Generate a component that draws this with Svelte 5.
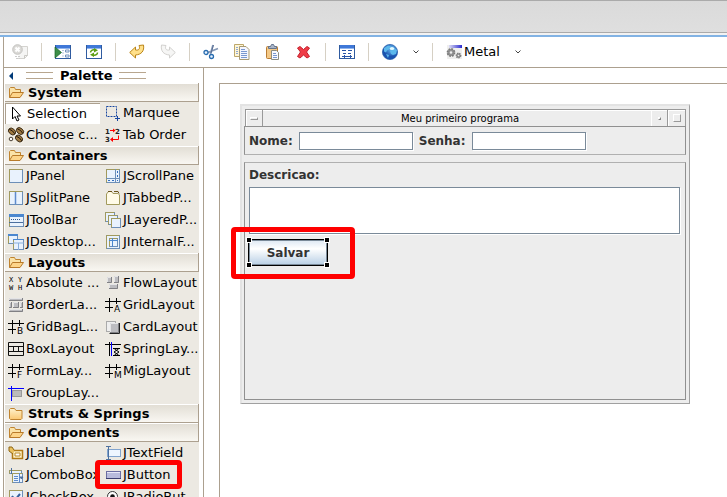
<script>
  const T = '#a29a5c';
  const B = '#6d8fb8';
  const window16 = '<rect x=".5" y="1.5" width="15" height="13" fill="#fff" stroke="#2f5ba0"/><rect x="1" y="1" width="14" height="3" fill="#3f78d8"/><path d="M1 4.5h14" stroke="#8fb4ee"/>';
  const hash = '<path d="M0 4.5h16M0 10.5h8M4.500 1v14M11.500 1v6" stroke="#000" fill="none"/>';
  const letter = (c) => `${hash}<text x="9" y="15" font-family="DejaVu Sans" font-size="9">${c}</text>`;
  const folderOpen = '<path d="M1.500 12.500v-9l1-1h4l1 2h5v3" fill="#fbe3a8" stroke="#c08430"/><path d="M1.500 12.500l3-5h11l-3.500 5z" fill="#fdd58a" stroke="#b87a2a"/>';
  const folderShut = '<path d="M1.500 12.500v-9l1-1h4l1.500 2h6v8l-1 1h-10.500z" fill="url(#fold)" stroke="#c08430"/>';
  const page = (x, y, w, h) => `<rect x="${x}.5" y="${y}.5" width="${w}" height="${h}" fill="#e9f2fd" stroke="${B}"/><path d="M${x}.5 ${y + h}.5V${y}.5h${w}" stroke="${T}" fill="none"/>`;
  const block = (x, y, w, h) => `<rect x="${x}" y="${y}" width="${w}" height="${h}" fill="#bcbcc0"/><path d="M${x + 0.5} ${y + h}V${y + 0.5}h${w}" stroke="#e4e4e6" fill="none"/><path d="M${x + w - 0.5} ${y}v${h - 0.5}H${x}" stroke="#808084" fill="none"/>`;
  const bean = (x, y) => `<g transform="rotate(40 ${x} ${y})"><ellipse cx="${x}" cy="${y}" rx="4" ry="2.900" fill="#a07a42" stroke="#2a1c0c" stroke-width=".8"/><path d="M${x - 3.5} ${y}q3.500 -1.500 7 0" stroke="#201408" stroke-width=".9" fill="none"/></g>`;

  const icons = {
    off: '<path d="M8 2.500h7.500v9l-3 3H6" fill="#f5f5f4" stroke="#d4d3cf"/><path d="M15.500 11.500h-3v3" stroke="#c9c8c4" fill="none"/><circle cx="5.500" cy="5.500" r="4.800" fill="#dad9d6" stroke="#c4c3c0"/><path d="M3.500 3.500l4 4m0-4l-4 4" stroke="#fff" stroke-width="2"/><path d="M3 12.500h5M4 14.500h4" stroke="#ccc" stroke-dasharray="2 1"/>',
    run: window16 + '<path d="M0 3v11l6.500-5.500z" fill="#3d8e48" stroke="#17642a" stroke-width=".7"/><path d="M7.500 6.500h1m2-.5h3.500v2h-3.500zM10.500 11h3.500v2h-3.500zM7.500 9h1M7.500 12h1" fill="#fff" stroke="#7090bd"/>',
    refresh: window16 + '<path d="M4.500 8.500c0-2 2-3 4-2.500M11.500 8.500c0 2-2 3-4 2.500" fill="none" stroke="#5d9e12" stroke-width="1.500"/><path d="M8 4l4 2.300-4 2.200zM8 13l-4-2.300 4-2.200z" fill="#5d9e12"/>',
    undo: '<path d="M.7 8.500L6.500 3v3c3 .5 5-1 3.500-4.500l4.500-.500c1 6-2 9.500-8 10v3z" fill="#ffe08a" stroke="#ba8518"/>',
    redo: '<path d="M15.300 8.500L9.500 3v3c-3 .5-5-1-3.500-4.500l-4.500-.500c-1 6 2 9.500 8 10v3z" fill="#f6f6f5" stroke="#d2d1cf"/>',
    cut: '<path d="M10 1L7.500 10M15 4.500L5 8.500" stroke="#8598b6" stroke-width="1.800"/><path d="M10.500 1L8 9" stroke="#4a628a" stroke-width=".8"/><circle cx="3" cy="8.500" r="2" fill="#e8f3ff" stroke="#286caf" stroke-width="1.300"/><circle cx="8.500" cy="12.500" r="2" fill="#e8f3ff" stroke="#286caf" stroke-width="1.300"/>',
    copy: '<path d="M.5 .5h9v12h-9z" fill="#fff6d5" stroke="#bda76b"/><path d="M2 3.500h2M2 5.500h2M2 7.500h2M2 9.500h2" stroke="#8ea6d4"/><path d="M5.500 2.500h6.500l3 3v10h-9.500z" fill="#f4f6ff" stroke="#a89a73"/><path d="M7 5.500h4M7 7.500h6M7 9.500h6M7 11.500h6M7 13.500h6" stroke="#7a98d0"/>',
    paste: '<rect x="1.500" y="2.500" width="11" height="12" rx="1" fill="#f4c987" stroke="#ba7d34"/><path d="M3.500 4.500V2.500h2l1-2h2l1 2h2v2z" fill="#a9b5c8" stroke="#65758e"/><path d="M6.500 6.500h5l2 2v7h-7z" fill="#f8faff" stroke="#8c8d80"/><path d="M8 9.500h3M8 11.500h4M8 13.500h4" stroke="#7a98d0"/>',
    del: '<path d="M4 2.500L7.500 5.500 11 2.500l2.500 1.500-3 4 3 4.500-2.500 1.500L7.500 11 4 14l-2.500-1.500 3-4.500-3-4z" fill="#ef3d47" stroke="#c4202c"/>',
    layout: window16 + '<path d="M3 6.500h4M9 6.500h4M4 9.500h3M9 9.500h3M3 12.500h10M5.500 11v3M11.500 11v3" stroke="#2854a6"/>',
    globe: '<circle cx="8" cy="8" r="7.600" fill="url(#sea)" stroke="#1f5aa8" stroke-width=".7"/><path d="M2 4l4-2.500 3 1-2 3-2 1-1 2-2-1zM8 7l4-3 3 2-1 4-3 1-2-1zM4 10l3 1-1 3z" fill="#5cb8ec"/><ellipse cx="10" cy="4.500" rx="2.200" ry="1.500" fill="#e0f8ff"/>',
    metal: '<rect x="1" y="1" width="15" height="14" fill="#efefee"/><rect x="3" y="1" width="13" height="3" fill="url(#bar)"/><g fill="#929292" stroke="#7a7a7a"><circle cx="5" cy="8.500" r="3.600" stroke-width="1.600" stroke-dasharray="1.800 1"/><circle cx="12.500" cy="11.500" r="2.200" stroke-width="1.400" stroke-dasharray="1.200 .8"/></g><circle cx="5" cy="8.500" r="1.200" fill="#eee"/><circle cx="12.500" cy="11.500" r=".8" fill="#eee"/>',
    arrow: '<path d="M4.500 1v12l2.500-2.500 2 4.500 2-1-2-4h3.500z" fill="#fff" stroke="#000"/>',
    marquee: '<rect x="1.500" y="1.500" width="10" height="10" fill="none" stroke="#1846a0" stroke-dasharray="2 1"/><path d="M10 13.500h5M12.500 11v5" stroke="#1846a0"/>',
    beans: '<rect width="16" height="16" fill="#f1ede3"/>' + bean(4, 4.5) + bean(12, 4) + bean(11, 11.5) + '<circle cx="3" cy="12" r="1.800" fill="#fff" stroke="#201408" stroke-width=".8"/>',
    tab: '<g font-family="DejaVu Sans" font-size="7" font-weight="bold" fill="#222"><text x="0" y="7">1</text><text x="10" y="7">2</text><text x="0" y="15">3</text></g><path d="M5 3.500h4M13.500 8.500v4H6" stroke="#f00" fill="none"/><path d="M8 1.500l2.500 2-2.500 2zM8 10l-3 2.500 3 2.500z" fill="#f00"/>',
    panel: page(1, 1, 13, 13),
    scroll: page(1, 1, 13, 13) + '<path d="M10.500 1v13M1 10.500h13" stroke="#6d8fb8"/><path d="M12 3h1v2h-1zM12 7h1v2h-1zM3 12h2v1H3zM7 12h2v1H7zM12 12h1v1h-1z" fill="#346fc0"/>',
    split: page(1, 1, 13, 13) + '<path d="M7.500 2v12" stroke="#5e8bcd" stroke-width="1.500"/>',
    tabbed: '<path d="M1.500 14.500V4l2-2.500h3l1.500 2h5l1.500 1.500v9.500z" fill="#fffbe8" stroke="#a29a5c"/><path d="M3 1.500h4m2 0h4l1 2" fill="none" stroke="#6b541b"/>',
    toolbar: page(1, 2, 14, 12) + '<rect x="1" y="2" width="15" height="3" fill="#4b87cf"/><path d="M3 7.500h10" stroke="#31588f" stroke-dasharray="1 1"/><path d="M1 10.500h14" stroke="#4b6f9e"/>',
    layers: page(0, 0, 9, 9) + page(3, 3, 9, 9) + page(6, 6, 9, 9),
    desktop: page(0, 0, 9, 9) + '<rect width="10" height="2" fill="#4b87cf"/>' + page(5, 5, 10, 10) + '<path d="M5 5.500h11" stroke="#4b87cf"/><path d="M10.500 9v7M5 9h11" stroke="#8bb0dc"/>',
    internal: page(1, 1, 13, 13) + page(4, 4, 8, 8) + '<path d="M4 6.500h9M7.500 4v9" stroke="#4b87cf"/>',
    abs: '<g font-family="DejaVu Sans Mono" font-size="7" fill="#000"><text x="1" y="7">X</text><text x="10" y="7">Y</text><text x="1" y="15">W</text><text x="10" y="15">H</text></g>',
    flow: block(2, 2, 5, 6) + block(9, 1, 5, 7) + block(4, 9, 9, 5),
    border: block(1, 1, 14, 3) + block(1, 5, 3, 6) + block(5, 5, 6, 6) + block(12, 5, 3, 6) + block(1, 12, 14, 3),
    grid: letter('A'), gridbag: letter('B'), form: letter('F'), mig: letter('M'),
    card: '<rect x="1.500" y="2.500" width="9" height="10" fill="#eee" stroke="#aaa"/>' + block(5, 4, 9, 10) + '<path d="M14.500 4v10.500H4.500" stroke="#222" fill="none"/>',
    box: '<path d="M.5 1.500h15v13H.5zM0 5.500h16M0 10.500h16M5.500 5v5M10.500 5v5" fill="none" stroke="#111"/>',
    spring: '<path d="M0 3.500h16M4.500 1v14" stroke="#000"/><path d="M6.500 1v14" stroke="#00f"/><path d="M8 7.500h7M8 14.500h7M9.500 8l4.500 3-4.500 3M13.500 8L9 11l4.500 3" stroke="#000" fill="none"/>',
    group: '<rect x="4.500" y="5.500" width="9" height="6" fill="#bbb" stroke="#999"/><path d="M0 3.500h16M3.500 1v15" stroke="#00f"/>',
    label: '<path d="M4.500 5.500h10v8h-10z" fill="#fff3c8" stroke="#b07a15" stroke-width="1.500"/><path d="M7 8h5v3H7z" fill="#fff" stroke="#b88928"/><path d="M5 9L1 6V2h3l2 3" fill="#eac15e" stroke="#8e6514"/>',
    field: '<rect x="2.500" y="4.500" width="13" height="7" fill="#eef6ff" stroke="#82a4ce"/><path d="M1 1.500h5M1 14.500h5M3.500 1v13" stroke="#4f719e"/>',
    combo: page(1, 3, 12, 3) + page(4, 6, 10, 9) + '<path d="M6 9.500h4M6 11.500h4M6 13.500h4M11.500 6v10" stroke="#5e8bcd"/><path d="M3.500 1v6M12 10h3l-1.500 2z" stroke="#4f719e" fill="#4f719e"/>',
    button: '<rect x="1.500" y="4.500" width="14" height="7" fill="#b8bbdc" stroke="#6a6da2"/><path d="M2 5.500h13" stroke="#e8e8f8"/><path d="M1 11.500h15" stroke="#3b3e70"/>',
    check: page(1, 1, 13, 13) + '<path d="M4 7l3 4 5-6" fill="none" stroke="#355f9c" stroke-width="2"/>',
    radio: '<circle cx="7.500" cy="7.500" r="5" fill="#fff" stroke="#333"/><circle cx="7.500" cy="7.500" r="2.300" fill="#111"/>'
  };

  const tools = [
    ['off', 'Stop'], null, ['run', 'Test'], ['refresh', 'Refresh'], null, ['undo', 'Undo'], ['redo', 'Redo'], null,
    ['cut', 'Cut'], ['copy', 'Copy'], ['paste', 'Paste'], ['del', 'Delete'], null, ['layout', 'Layout assistant'], null
  ];

  const groups = [
    { name: 'System', items: [['arrow', 'Selection'], ['marquee', 'Marquee'], ['beans', 'Choose c...'], ['tab', 'Tab Order']] },
    { name: 'Containers', items: [['panel', 'JPanel'], ['scroll', 'JScrollPane'], ['split', 'JSplitPane'], ['tabbed', 'JTabbedP...'], ['toolbar', 'JToolBar'], ['layers', 'JLayeredP...'], ['desktop', 'JDesktop...'], ['internal', 'JInternalF...']] },
    { name: 'Layouts', items: [['abs', 'Absolute ...'], ['flow', 'FlowLayout'], ['border', 'BorderLa...'], ['grid', 'GridLayout'], ['gridbag', 'GridBagL...'], ['card', 'CardLayout'], ['box', 'BoxLayout'], ['spring', 'SpringLay...'], ['form', 'FormLay...'], ['mig', 'MigLayout'], ['group', 'GroupLay...']] },
    { name: 'Struts & Springs', items: [] },
    { name: 'Components', items: [['label', 'JLabel'], ['field', 'JTextField'], ['combo', 'JComboBox'], ['button', 'JButton'], ['check', 'JCheckBox'], ['radio', 'JRadioBut...']] }
  ];
  let selected = $state('Selection');
</script>

{#snippet icon(body)}
  <svg class="icon" viewBox="0 0 16 16" aria-hidden="true">{@html body}</svg>
{/snippet}

{#snippet chevron(label)}
  <button class="chevron" aria-label={label}><svg viewBox="0 0 6 4" aria-hidden="true"><path d="M.5 .5L3 3 5.500 .5" fill="none" stroke="#444" /></svg></button>
{/snippet}

<svg class="defs" aria-hidden="true">
  <defs>
    <linearGradient id="fold" x2="0" y2="1"><stop stop-color="#fff2cc" /><stop offset="1" stop-color="#fbc873" /></linearGradient>
    <linearGradient id="bar"><stop stop-color="#dcdcf4" /><stop offset="1" stop-color="#2a2ad0" /></linearGradient>
    <radialGradient id="sea" cx=".6" cy=".3"><stop stop-color="#6cc0f4" /><stop offset="1" stop-color="#1b53b0" /></radialGradient>
  </defs>
</svg>

<div class="app">
  <div class="band"></div>
  <div class="editor">
    <div class="toolbar">
      {#each tools as tool}
        {#if tool}
          <button aria-label={tool[1]}>{@render icon(icons[tool[0]])}</button>
        {:else}
          <span class="sep"></span>
        {/if}
      {/each}
      <button aria-label="Locale">{@render icon(icons.globe)}</button>
      {@render chevron('Locale menu')}
      <span class="sep"></span>
      <button class="look">{@render icon(icons.metal)}<span>Metal</span></button>
      {@render chevron('Look and feel menu')}
    </div>
    <div class="body">
      <aside class="palette">
        <div class="title">
          <button class="collapse" aria-label="Collapse palette"><svg viewBox="0 0 4 8" aria-hidden="true"><path d="M4 0v8L0 4z" fill="#003a78" /></svg></button>
          <span class="grip"></span>
          <span>Palette</span>
          <span class="grip"></span>
        </div>
        <div class="drawers">
          {#each groups as group}
            <button class="drawer">{@render icon(group.items.length ? folderOpen : folderShut)}{group.name}</button>
            <div class="items">
              {#each group.items as [key, name]}
                <button class="item" class:selected={selected === name} onclick={() => (selected = name)}>
                  {@render icon(icons[key])}<span>{name}</span>
                  {#if name === 'JButton'}<i class="mark"></i>{/if}
                </button>
              {/each}
            </div>
          {/each}
        </div>
      </aside>
      <main class="canvas">
        <section class="frame">
          <header>
            <button aria-label="Window menu"><i class="dash"></i></button>
            <h1>Meu primeiro programa</h1>
            <button aria-label="Minimize"><i class="dot"></i></button>
            <button aria-label="Maximize"><i class="square"></i></button>
          </header>
          <div class="fields">
            <label for="nome">Nome:</label><input id="nome" type="text" />
            <label for="senha">Senha:</label><input id="senha" type="password" />
          </div>
          <div class="details">
            <label for="descricao">Descricao:</label>
            <textarea id="descricao"></textarea>
            <div class="target">
              <button class="save">Salvar</button>
              <i class="handle tl"></i><i class="handle tr"></i><i class="handle bl"></i><i class="handle br"></i>
              <i class="mark"></i>
            </div>
          </div>
        </section>
      </main>
    </div>
  </div>
</div>

<style>
  :global(body) { overflow: hidden; }
  .app, .app * { box-sizing: border-box; }
  .app {
    height: 100vh;
    display: flex;
    flex-direction: column;
    background: #fff;
    color: #000;
    font: 13px/16px "DejaVu Sans", sans-serif;
  }
  .defs { position: absolute; width: 0; height: 0; }
  button { font: inherit; color: inherit; padding: 0; margin: 0; border: 0; background: none; text-align: left; }
  .icon { display: block; width: 16px; height: 16px; flex: none; overflow: visible; }

  .band {
    flex: none;
    height: 37px;
    border-bottom: 2px solid #82b3e4;
    background: linear-gradient(#aaa 1px, #dadada 1px, #dfdfdf 32px, #aaa 32px, #aaa 33px, #f2f2f2 33px);
  }
  .editor {
    flex: 1;
    min-height: 0;
    display: flex;
    flex-direction: column;
    margin-left: 3px;
    border-left: 1px solid #aca08f;
  }
  .toolbar {
    flex: none;
    display: flex;
    align-items: center;
    gap: 15px;
    height: 31px;
    padding-left: 8px;
    border-bottom: 1px solid #aca08f;
  }
  .sep { width: 1px; height: 18px; margin: 0 -2px; background: #d6d0c4; }
  .look { display: flex; align-items: center; gap: 2px; }
  .chevron { width: 6px; }
  .chevron svg { display: block; width: 6px; height: 4px; }

  .body { flex: 1; min-height: 0; display: flex; }
  .palette { flex: none; width: 200px; border-right: 1px solid #aca08f; overflow: hidden; }
  .title { display: flex; align-items: center; height: 15px; padding-left: 5px; gap: 7px; font-weight: bold; }
  .collapse { width: 4px; margin-right: 6px; }
  .collapse svg { display: block; width: 4px; height: 8px; }
  .grip { width: 27px; height: 7px; border: solid #b8a68e; border-width: 1px 0; }
  .drawers { margin: 0 4px 0 1px; background: #ece9e2; }
  .drawer {
    display: flex;
    align-items: center;
    gap: 4px;
    width: 100%;
    height: 19px;
    padding: 2px 0 0 3px;
    border: solid #aca08f;
    border-width: 0 1px 1px 0;
    background: linear-gradient(#fff 1px, #e2ded5 1px, #f9f7f2);
    font-weight: bold;
  }
  .items { display: grid; grid-template-columns: 1fr 1fr; }
  .item { position: relative; display: flex; align-items: center; gap: 2px; height: 22px; min-width: 0; padding-left: 3px; white-space: nowrap; }
  .selected { height: 21px; margin: 1px 2px 0 0; padding-left: 2px; gap: 3px; border: solid #aca08f; border-width: 1px 0 0 1px; background: #fff; }
  .mark { position: absolute; border: 5px solid #f00; border-radius: 4px; }
  .item .mark { inset: -4px 17px -3px -7px; z-index: 1; }

  .canvas { flex: 1; min-width: 0; margin: 15px 0 0 15px; border: solid #aca08f; border-width: 1px 0 0 1px; }
  .frame {
    display: flex;
    flex-direction: column;
    height: 300px;
    margin: 20px 37px 0 20px;
    padding: 3px 3px 3px 2px;
    border: 2px solid #e3e3e3;
    border-right: 1px solid #a0a0a0;
    border-bottom: 1px solid #a0a0a0;
    background: #ededed;
    color: #333;
    font-size: 12px;
    font-weight: bold;
  }
  .frame header {
    display: flex;
    height: 17px;
    margin: 0 0 0 1px;
    border: 1px solid #999;
    border-bottom: 0;
    box-shadow: inset 1px 1px #fff;
  }
  .frame h1 { flex: 1; margin: 0; padding-left: 6px; color: #000; font-size: 10px; font-weight: normal; line-height: 17px; text-align: center; }
  .frame header button {
    display: flex;
    align-items: center;
    justify-content: center;
    width: 17px;
    border-right: 1px solid #999;
    box-shadow: inset 1px 1px #fff;
  }
  .frame header button:last-child { border-right: 0; }
  .dash { width: 8px; height: 3px; border: 1px solid #fff; border-right-color: #999; border-bottom-color: #999; }
  .dot { width: 3px; height: 3px; border: 1px solid #fff; border-right-color: #888; border-bottom-color: #888; }
  .square { width: 8px; height: 8px; border: 1px solid #fff; border-right-color: #999; border-bottom-color: #999; }
  .fields {
    display: flex;
    align-items: center;
    gap: 6px;
    height: 29px;
    padding-left: 4px;
    border: 1px solid #909090;
    border-bottom-color: #b0b0b0;
  }
  input, textarea { margin: 0; padding: 0 2px; border: 1px solid #7a8a99; border-radius: 0; outline: 0; background: #fff; box-shadow: 1px 1px #fff; font: inherit; }
  input { width: 114px; height: 18px; }
  .fields label { line-height: 14px; }
  .details {
    flex: 1;
    display: flex;
    flex-direction: column;
    align-items: flex-start;
    padding: 4px 5px 0 4px;
    margin-top: 7px;
    border: 1px solid #909090;
    border-top-color: #b0b0b0;
  }
  textarea { width: 100%; height: 47px; margin-top: 4px; resize: none; }
  .target { position: relative; margin: 5px 0 0 -1px; }
  .save {
    display: block;
    width: 80px;
    height: 27px;
    border: 1px solid #000;
    background: linear-gradient(#dde8f3, #fff 35%, #b8cfe5);
    box-shadow: inset 0 0 0 1px #7a8a99;
    text-align: center;
  }
  .handle { position: absolute; width: 6px; height: 6px; border: 1px solid #fff; background: #000; }
  .tl { left: -2px; top: -2px; }
  .tr { right: -2px; top: -2px; }
  .bl { left: -2px; bottom: -2px; }
  .br { right: -2px; bottom: -2px; }
  .target .mark { inset: -12px -27px -13px -17px; }
</style>
